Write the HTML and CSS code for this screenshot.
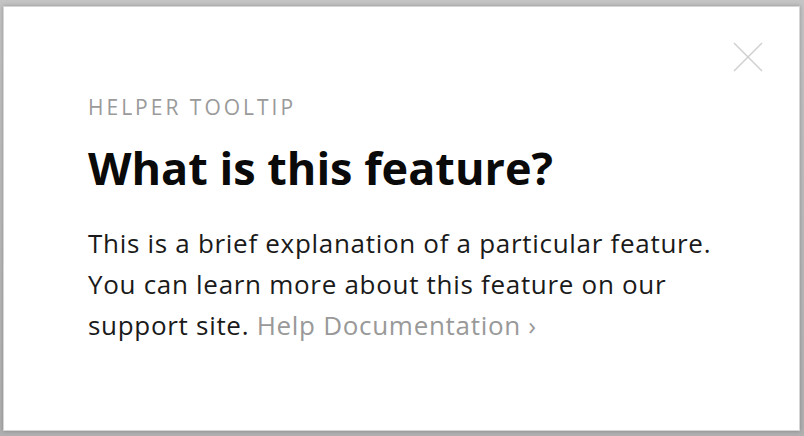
FILE: index.html
```html
<!DOCTYPE html>
<html lang="en">
<head>
    <meta charset="UTF-8">
    <meta name="viewport" content="width=device-width, initial-scale=1.0">
    <title>Helper Tooltip</title>
    <link rel="stylesheet" href="styles.css">
</head>
<body>
    <div class="tooltip">
        <button class="close" aria-label="Close">
            <svg width="30" height="30" viewBox="0 0 30 30">
                <path d="M1 1 L29 29 M29 1 L1 29" stroke="#d0d0d0" stroke-width="1.5" fill="none"/>
            </svg>
        </button>
        <div class="eyebrow">HELPER TOOLTIP</div>
        <h1 class="title">What is this feature?</h1>
        <p class="text">
            This is a brief explanation of a particular feature.<br>
            You can learn more about this feature on our<br>
            support site. <a href="#" class="link">Help Documentation ›</a>
        </p>
    </div>
</body>
</html>
```

FILE: styles.css
```css
html, body {
    margin: 0;
    height: 100%;
}

body {
    background: linear-gradient(#c4c4c4, #b0b0b0);
    padding: 6px 4px 5px 3px;
    box-sizing: border-box;
    font-family: "Open Sans", Lato, sans-serif;
}

.tooltip {
    position: relative;
    height: 100%;
    box-sizing: border-box;
    background: #fff;
    border: 1px solid #d6d6d6;
    box-shadow: 0 0 4px rgba(0, 0, 0, 0.25);
    padding: 87px 40px 0 84px;
}

.close {
    position: absolute;
    top: 35px;
    right: 36px;
    padding: 0;
    border: none;
    background: none;
    cursor: pointer;
}

.eyebrow {
    font-size: 21px;
    letter-spacing: 3px;
    color: #9a9a9a;
    line-height: 27px;
}

.title {
    margin: 19px 0 0;
    font-size: 45px;
    font-weight: 700;
    color: #0a0a0a;
    line-height: 56px;
}

.text {
    margin: 27px 0 0;
    font-size: 26px;
    letter-spacing: 0.7px;
    line-height: 41px;
    color: #1a1a1a;
}

.link {
    color: #999;
    text-decoration: none;
}
```
